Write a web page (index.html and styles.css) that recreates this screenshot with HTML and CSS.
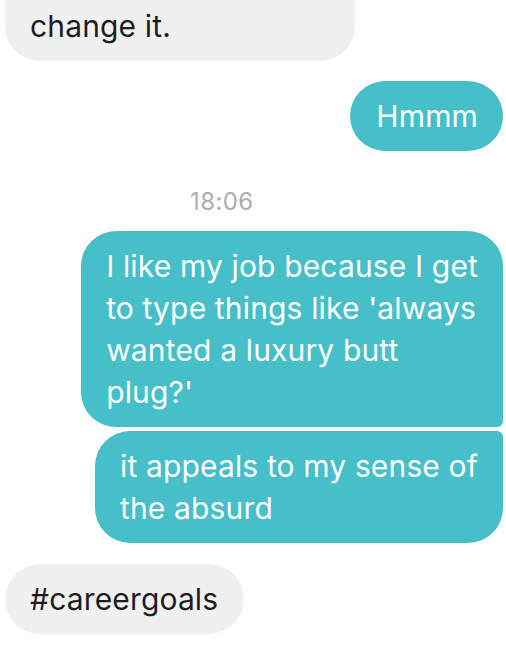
FILE: index.html
```html
<!DOCTYPE html>
<html lang="en">
<head>
<meta charset="utf-8">
<title>Messages</title>
<link rel="stylesheet" href="styles.css">
</head>
<body>
<div class="thread">
  <div class="msg in first">change it.</div>
  <div class="msg out solo hmm">Hmmm</div>
  <div class="time">18:06</div>
  <div class="msg out top">I like my job because I get<br>to type things like 'always<br>wanted a luxury butt<br>plug?'</div>
  <div class="msg out bottom">it appeals to my sense of<br>the absurd</div>
  <div class="msg in solo goals">#careergoals</div>
</div>
</body>
</html>
```
FILE: styles.css
```css
html, body {
  margin: 0;
  padding: 0;
  background: #ffffff;
}
body {
  font-family: Inter, "Noto Sans", "Liberation Sans", sans-serif;
  font-size: 30px;
  line-height: 42px;
  letter-spacing: 0.15px;
  overflow: hidden;
}
.thread {
  display: flex;
  flex-direction: column;
  padding: 0 3px 0 5px;
}
.msg {
  padding: 14px 25px;
  border-radius: 35px;
  white-space: nowrap;
}
.in {
  align-self: flex-start;
  background: #f0f0f0;
  color: #1d1d1d;
}
.out {
  align-self: flex-end;
  background: #46bfc8;
  color: #ffffff;
}
.first {
  width: 300px;
  padding-top: 5px;
  border-radius: 0 0 35px 35px;
}
.hmm {
  margin-top: 20px;
  padding-left: 26px;
}
.time {
  margin: 36px 0 14px 185px;
  font-size: 24px;
  line-height: 30px;
  letter-spacing: 0.4px;
  color: #adadad;
}
.top {
  border-radius: 35px 35px 6px 35px;
}
.bottom {
  margin-top: 4px;
  border-radius: 35px 6px 35px 35px;
}
.goals {
  margin-top: 21px;
  padding-right: 26px;
}
```
